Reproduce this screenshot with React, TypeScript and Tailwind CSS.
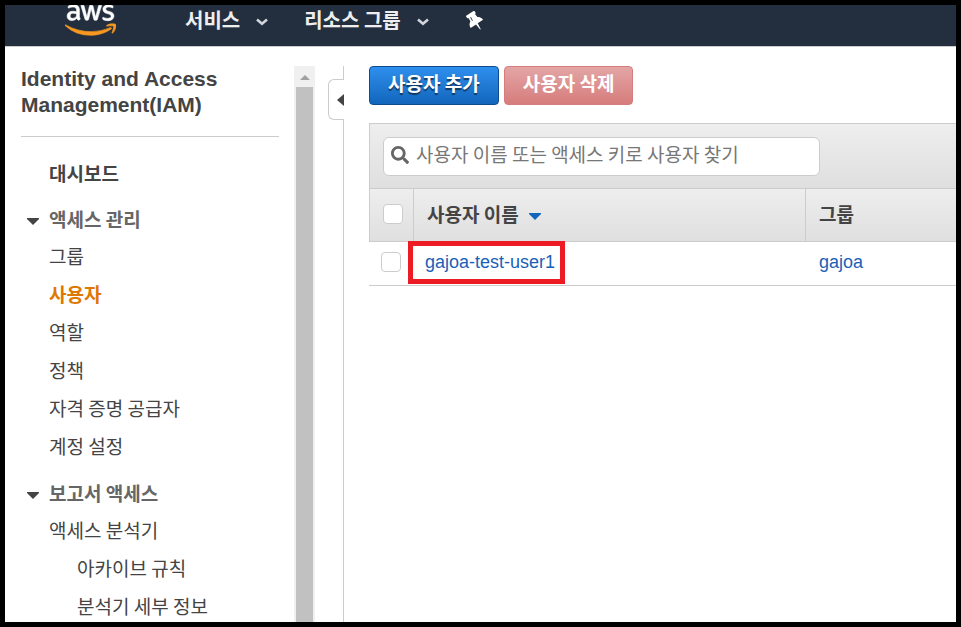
import React, { useState } from 'react';
import { FaAws, FaSearch } from 'react-icons/fa';

const koreanFont = "font-['Noto_Sans_CJK_KR',sans-serif]";
const latinFont = "font-['Liberation_Sans','Noto_Sans_CJK_KR',sans-serif]";

const Chevron: React.FC = () => (
  <svg viewBox="0 0 12 8" className="w-3 h-2 mt-1 text-gray-300" fill="none" stroke="currentColor" strokeWidth="2.6">
    <path d="M1 1.5 L6 5.8 L11 1.5" />
  </svg>
);

const Caret: React.FC<{ className?: string }> = ({ className = '' }) => (
  <svg viewBox="0 0 12 7" className={`w-3 h-[7px] ${className}`} fill="currentColor">
    <path d="M0 0H12V1L6 7L0 1Z" />
  </svg>
);

const Pin: React.FC = () => (
  <svg viewBox="0 0 20 20" className="size-5" fill="#fff">
    <g transform="rotate(-33 10 10)">
      <path d="M5 .8H15V3.6L13.8 4.4L14.2 8C16.2 9 17.4 10.6 17.4 13.4H11L10.4 20H9.6L9 13.4H2.6C2.6 10.6 3.8 9 5.8 8L6.2 4.4L5 3.6Z" />
      <path d="M8.4 4.4L8 8.4" stroke="#232f3e" strokeWidth="0.9" />
    </g>
  </svg>
);

const TopBar: React.FC = () => (
  <header className="flex items-center h-[42px] shrink-0 overflow-hidden bg-[#232f3e] border-b border-[#ccc] pl-[60px] pb-3 text-xl font-bold text-[#eee] [text-shadow:0_1px_1px_#000]">
    <a href="#home" aria-label="AWS" className="shrink-0 mr-[69px]">
      <svg className="absolute w-0 h-0" aria-hidden="true">
        <linearGradient id="aws-fill" x1="0" y1="0" x2="0" y2="1">
          <stop offset="0.57" stopColor="#fff" />
          <stop offset="0.57" stopColor="#f7981f" />
        </linearGradient>
      </svg>
      <FaAws fill="url(#aws-fill)" stroke="url(#aws-fill)" strokeWidth="8" className="w-[51px] h-[42px]" />
    </a>
    <nav className="flex items-center">
      <button className="flex items-center gap-4 mr-9">
        서비스
        <Chevron />
      </button>
      <button className="flex items-center gap-4 mr-9">
        리소스 그룹
        <Chevron />
      </button>
      <button aria-label="고정" className="pt-0.5">
        <Pin />
      </button>
    </nav>
  </header>
);

const groups = [
  {
    title: '액세스 관리',
    items: [
      { label: '그룹' },
      { label: '사용자', active: true },
      { label: '역할' },
      { label: '정책' },
      { label: '자격 증명 공급자' },
      { label: '계정 설정' },
    ],
  },
  {
    title: '보고서 액세스',
    items: [
      { label: '액세스 분석기' },
      { label: '아카이브 규칙', nested: true },
      { label: '분석기 세부 정보', nested: true },
    ],
  },
];

const itemClass = (item: { active?: boolean; nested?: boolean }) => {
  if (item.active) return 'font-bold text-[#e07700]';
  if (item.nested) return 'pl-7';
  return '';
};

const Sidebar: React.FC = () => (
  <aside className="w-[274px] shrink-0 pl-4 text-[19px] text-[#444]">
    <h1 className={`text-[21px] leading-[26px] font-bold pb-[18px] border-b border-[#ccc] ${latinFont}`}>
      Identity and Access Management(IAM)
    </h1>
    <nav className="pt-[18px]">
      <a href="#dashboard" className="flex items-center h-9 pl-7 font-bold">
        대시보드
      </a>
      {groups.map((group) => (
        <section key={group.title} className="mt-2.5">
          <button className="flex items-center gap-2.5 h-9 pl-1.5 font-bold text-[#666]">
            <Caret className="mt-1 text-[#444]" />
            {group.title}
          </button>
          <ul className="pl-7">
            {group.items.map((item) => (
              <li key={item.label}>
                <a href="#nav" className={`flex items-center h-[38px] ${itemClass(item)}`}>
                  {item.label}
                </a>
              </li>
            ))}
          </ul>
        </section>
      ))}
    </nav>
  </aside>
);

const ScrollTrack: React.FC = () => (
  <div className="flex flex-col w-[21px] shrink-0 ml-[15px] px-0.5 bg-[#f0f0f0]">
    <div className="flex items-center justify-center h-[21px] shrink-0 pt-0.5">
      <svg viewBox="0 0 10 5" className="w-2.5 h-[5px]" fill="#a0a0a0">
        <path d="M0 5L5 0L10 5Z" />
      </svg>
    </div>
    <div className="flex-1 bg-[#c1c1c1]" />
  </div>
);

const Splitter: React.FC = () => (
  <div className="flex flex-col w-4 shrink-0 ml-[13px]">
    <div className="h-[13px] border-r border-[#ccc]" />
    <button aria-label="메뉴 접기" className="flex items-center justify-end h-[41px] shrink-0 border border-r-0 border-[#ccc] rounded-l-md">
      <svg viewBox="0 0 7 12" className="w-[7px] h-3" fill="#444">
        <path d="M7 0V12L0 6Z" />
      </svg>
    </button>
    <div className="flex-1 border-r border-[#ccc]" />
  </div>
);

const checkboxClass = 'block appearance-none size-5 bg-white border border-[#ccc] rounded checked:bg-[#1166bb]';

const UserTable: React.FC = () => {
  const [selected, setSelected] = useState(false);
  const toggle = () => setSelected(!selected);

  return (
    <table className="w-full table-fixed border-separate border-spacing-0 text-left text-[#444]">
      <colgroup>
        <col className="w-[45px]" />
        <col className="w-[392px]" />
        <col />
      </colgroup>
      <thead>
        <tr className="h-[53px] bg-linear-to-b from-[#eee] to-[#dfdfdf] text-[19px]">
          <th className="border-x border-b border-[#ccc] pl-[13px] pb-0.5">
            <input type="checkbox" aria-label="모두 선택" checked={selected} onChange={toggle} className={checkboxClass} />
          </th>
          <th className="border-r border-b border-[#ccc] pl-[13px] pb-0.5">
            <button className="flex items-center gap-2.5">
              사용자 이름
              <Caret className="mt-1 text-[#1166bb]" />
            </button>
          </th>
          <th className="border-b border-[#ccc] pl-[13px] pb-0.5">그룹</th>
        </tr>
      </thead>
      <tbody className={latinFont}>
        <tr className="h-11 text-lg">
          <td className="border-b border-[#ccc] pl-3 pb-1">
            <input type="checkbox" aria-label="gajoa-test-user1 선택" checked={selected} onChange={toggle} className={checkboxClass} />
          </td>
          <td className="relative border-b border-[#ccc] pl-[11px] pb-1">
            <a href="#user" className="text-[#1a5fb8]">gajoa-test-user1</a>
            <span className="absolute -left-1.5 -top-px w-[157px] h-[43px] border-5 border-[#ed1c24] pointer-events-none" />
          </td>
          <td className="border-b border-[#ccc] pl-[13px] pb-1">
            <a href="#group" className="text-[#1a5fb8]">gajoa</a>
          </td>
        </tr>
      </tbody>
    </table>
  );
};

const App: React.FC = () => {
  return (
    <div className={`flex flex-col h-screen overflow-hidden bg-white border-5 border-black ${koreanFont}`}>
      <TopBar />
      <div className="flex flex-1 min-h-0 overflow-hidden pt-[19px]">
        <Sidebar />
        <ScrollTrack />
        <Splitter />
        <main className="flex-1 min-w-0 pl-[25px]">
          <div className="flex gap-[5px] mb-[18px] text-[19px] leading-5 font-bold text-white">
            <button className="h-[39px] px-[18px] pb-1.5 rounded border border-[#0e4a8c] bg-linear-to-b from-[#2f8fee] to-[#1166bb] [text-shadow:0_2px_1px_#0008]">
              사용자 추가
            </button>
            <button disabled className="h-[39px] px-[18px] pb-1.5 rounded border border-[#d67c7c] bg-linear-to-b from-[#e3a5a5] to-[#d67c7c]">
              사용자 삭제
            </button>
          </div>
          <div className="border-y border-l border-[#ccc] bg-linear-to-b from-[#eee] to-[#dfdfdf] p-[13px] pb-3">
            <label className="flex items-center gap-[7px] w-[437px] max-w-full h-[39px] px-[7px] pb-1 bg-white border border-[#ccc] rounded-md">
              <FaSearch className="size-[18px] shrink-0 text-[#666]" />
              <input
                type="text"
                aria-label="사용자 찾기"
                placeholder="사용자 이름 또는 액세스 키로 사용자 찾기"
                className="flex-1 min-w-0 text-[19px] outline-none placeholder:text-[#777]"
              />
            </label>
          </div>
          <UserTable />
        </main>
      </div>
    </div>
  );
};

export default App;
